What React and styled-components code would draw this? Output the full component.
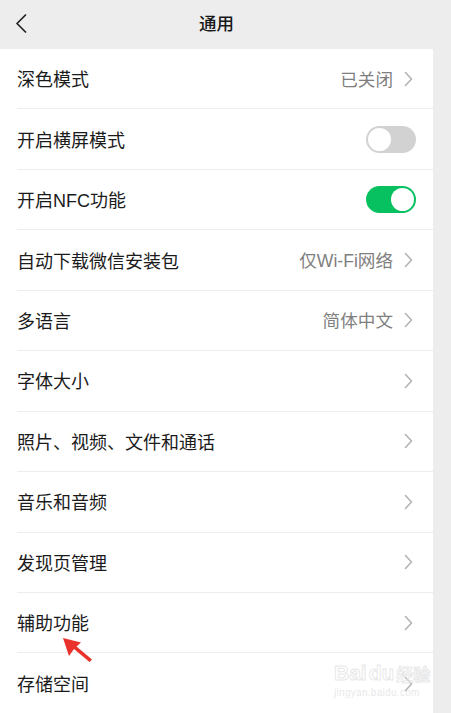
import React from "react";
import styled, { createGlobalStyle } from "styled-components";

const Global = createGlobalStyle`
  html, body { margin: 0; padding: 0; background: #ededed; }
  body { font-family: "Liberation Sans", "Noto Sans CJK SC", sans-serif; -webkit-font-smoothing: antialiased; }
`;

const Page = styled.div`
  position: relative;
  width: 451px;
  height: 713px;
  overflow: hidden;
  background: #ededed;
`;

const Column = styled.div`
  width: 433px;
  display: flex;
  flex-direction: column;
`;

const Header = styled.header`
  height: 49px;
  display: grid;
  grid-template-columns: 1fr auto 1fr;
  align-items: center;
  padding-left: 15px;
  padding-right: 15px;
  box-sizing: border-box;
`;

const Back = styled.div`
  display: flex;
  align-items: center;
  height: 20px;
  margin-top: -3px;
`;

const Title = styled.h1`
  margin: 0 0 4px 0;
  font-family: "Noto Sans CJK SC", sans-serif;
  font-size: 17.5px;
  font-weight: 500;
  color: #181818;
`;

const List = styled.div`
  background: #fff;
  display: flex;
  flex-direction: column;
  padding-left: 17px;
  height: 664px;
`;

const Row = styled.div`
  height: 60.45px;
  flex: 0 0 60.45px;
  box-sizing: border-box;
  display: flex;
  align-items: center;
  justify-content: space-between;
  padding-right: ${(p) => (p.$toggle ? "17px" : "20px")};
  border-bottom: ${(p) => (p.$last ? "none" : "1px solid #ededed")};
`;

const Label = styled.span`
  font-size: 18px;
  color: #1b1b1b;
  margin-top: -1px;
`;

const Right = styled.div`
  display: flex;
  align-items: center;
  gap: 11px;
`;

const Value = styled.span`
  font-size: 17.6px;
  color: #7f7f7f;
  margin-top: -1px;
`;

const Track = styled.div`
  width: 50px;
  height: 27px;
  border-radius: 14px;
  background: ${(p) => (p.$on ? "#07c160" : "#d2d2d2")};
  display: flex;
  align-items: center;
  justify-content: ${(p) => (p.$on ? "flex-end" : "flex-start")};
  padding: 2px;
  box-sizing: border-box;
`;

const Knob = styled.div`
  width: 23px;
  height: 23px;
  border-radius: 50%;
  background: #fff;
`;

const Watermark = styled.div`
  position: absolute;
  left: 334px;
  top: 662px;
  white-space: nowrap;
  font-family: "Liberation Sans", sans-serif;
  pointer-events: none;
`;

const WmLine = styled.div`
  display: flex;
  align-items: flex-end;
  gap: 2px;
  font-size: 21px;
  line-height: 22px;
  font-weight: 700;
  -webkit-text-stroke: 1px rgba(215, 215, 215, 0.6);
  color: rgba(255, 255, 255, 0.5);
`;

const WmSmall = styled.div`
  font-size: 10px;
  margin-top: 3px;
  color: rgba(215, 215, 215, 0.6);
  letter-spacing: 0.3px;
`;

const WmCn = styled.span`
  font-family: "Noto Sans CJK SC", sans-serif;
  font-size: 17px;
  line-height: 20px;
`;

const Annotation = styled.svg`
  position: absolute;
  left: 58px;
  top: 632px;
  pointer-events: none;
`;

const Chevron = () => (
  <svg width="9" height="16" viewBox="0 0 9 16">
    <polyline points="1.5,1.5 7.5,8 1.5,14.5" fill="none" stroke="#b4b4b4" strokeWidth="1.6" strokeLinecap="round" strokeLinejoin="round" />
  </svg>
);

const rows = [
  { label: "深色模式", value: "已关闭" },
  { label: "开启横屏模式", toggle: "off" },
  { label: "开启NFC功能", toggle: "on" },
  { label: "自动下载微信安装包", value: "仅Wi-Fi网络" },
  { label: "多语言", value: "简体中文" },
  { label: "字体大小" },
  { label: "照片、视频、文件和通话" },
  { label: "音乐和音频" },
  { label: "发现页管理" },
  { label: "辅助功能" },
  { label: "存储空间" },
];

export default function App() {
  return (
    <Page>
      <Global />
      <Column>
        <Header>
          <Back>
            <svg width="12" height="19" viewBox="0 0 12 19">
              <polyline points="10.5,1 2,9.5 10.5,18" fill="none" stroke="#222" strokeWidth="1.7" strokeLinecap="round" strokeLinejoin="round" />
            </svg>
          </Back>
          <Title>通用</Title>
          <span />
        </Header>
        <List>
          {rows.map((r, i) => (
            <Row key={r.label} $toggle={!!r.toggle} $last={i === rows.length - 1}>
              <Label>{r.label}</Label>
              {r.toggle ? (
                <Track $on={r.toggle === "on"}>
                  <Knob />
                </Track>
              ) : (
                <Right>
                  {r.value && <Value>{r.value}</Value>}
                  <Chevron />
                </Right>
              )}
            </Row>
          ))}
        </List>
      </Column>
      <Annotation width="40" height="32" viewBox="0 0 40 32">
        <path d="M5 6 L23 10.5 L18.5 14.5 L34 27.5 L31.5 30 L16 17 L11 24 Z" fill="#e8322b" />
      </Annotation>
      <Watermark>
        <WmLine>
          <span>Bai</span>
          <span>du</span>
          <WmCn>经验</WmCn>
        </WmLine>
        <WmSmall>jingyan.baidu.com</WmSmall>
      </Watermark>
    </Page>
  );
}
